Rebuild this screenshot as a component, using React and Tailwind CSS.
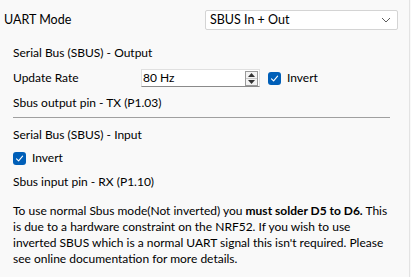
import { useState } from 'react';

function CheckBox({ checked, onChange }) {
  return (
    <button
      onClick={onChange}
      className={`w-[13px] h-[13px] rounded-[3px] flex items-center justify-center ${checked ? 'bg-[#005fb8]' : 'bg-white border border-[#8a8a8a]'}`}
    >
      {checked && (
        <svg width="9" height="9" viewBox="0 0 9 9" fill="none">
          <path d="M1.5 4.8 L3.6 6.8 L7.6 2.2" stroke="white" strokeWidth="1.1" strokeLinecap="round" strokeLinejoin="round" />
        </svg>
      )}
    </button>
  );
}

export default function App() {
  const [mode, setMode] = useState('SBUS In + Out');
  const [outInvert, setOutInvert] = useState(true);
  const [inInvert, setInInvert] = useState(true);

  return (
    <div className="w-[411px] h-[277px] bg-[#f9f9f9] flex text-[12px] text-black font-['Lato',sans-serif] leading-[16px]">
      <div className="w-[409px] flex flex-col">
        <div className="flex items-center h-[20px] mt-[10px] pl-[4px] pr-[11px]">
          <span className="text-[12.5px]">UART Mode</span>
          <div className="ml-auto w-[193px] h-[20px] bg-white border border-[#d4d4d4] rounded-[2px] flex items-center pl-[4px] pr-[6px]">
            <span className="flex-1 text-[12.5px]">{mode}</span>
            <svg width="10" height="6" viewBox="0 0 10 6" fill="none">
              <path d="M1 1 L5 5 L9 1" stroke="#5c5c5c" strokeWidth="1" />
            </svg>
          </div>
        </div>

        <div className="flex flex-col pl-[13px]">
          <div className="h-[16px] mt-[15px]">Serial Bus (SBUS) - Output</div>

          <div className="flex items-center h-[18px] mt-[8px]">
            <span className="w-[128px]">Update Rate</span>
            <div className="w-[119px] h-[18px] bg-white border border-[#e0e0e0] border-b-[#8a8a8a] flex items-center pl-[1px]">
              <span className="flex-1">80 Hz</span>
              <div className="w-[13px] h-[15px] mr-[1px] border border-[#9a9a9a] bg-[#f3f3f3] flex flex-col">
                <div className="flex-1 flex items-center justify-center border-b border-[#c8c8c8]">
                  <svg width="7" height="4" viewBox="0 0 7 4"><path d="M0 4 L3.5 0 L7 4 Z" fill="#333" /></svg>
                </div>
                <div className="flex-1 flex items-center justify-center">
                  <svg width="7" height="4" viewBox="0 0 7 4"><path d="M0 0 L3.5 4 L7 0 Z" fill="#333" /></svg>
                </div>
              </div>
            </div>
            <div className="ml-[8px]">
              <CheckBox checked={outInvert} onChange={() => setOutInvert(!outInvert)} />
            </div>
            <span className="ml-[6px]">Invert</span>
          </div>

          <div className="h-[16px] mt-[8px]">Sbus output pin - TX (P1.03)</div>

          <div className="w-[377px] h-[1px] bg-[#a0a0a0] mt-[6px]" />

          <div className="h-[16px] mt-[9px]">Serial Bus (SBUS) - Input</div>

          <div className="flex items-center h-[16px] mt-[7px]">
            <CheckBox checked={inInvert} onChange={() => setInInvert(!inInvert)} />
            <span className="ml-[6px]">Invert</span>
          </div>

          <div className="h-[16px] mt-[8px]">Sbus input pin - RX (P1.10)</div>

          <p className="mt-[13px] whitespace-nowrap">
            To use normal Sbus mode(Not inverted) you <b>must solder D5 to D6.</b> This<br />
            is due to a hardware constraint on the NRF52. If you wish to use<br />
            inverted SBUS which is a normal UART signal this isn't required. Please<br />
            see online documentation for more details.
          </p>
        </div>
      </div>
      <div className="w-[1px] bg-[#e3e3e3]" />
    </div>
  );
}
